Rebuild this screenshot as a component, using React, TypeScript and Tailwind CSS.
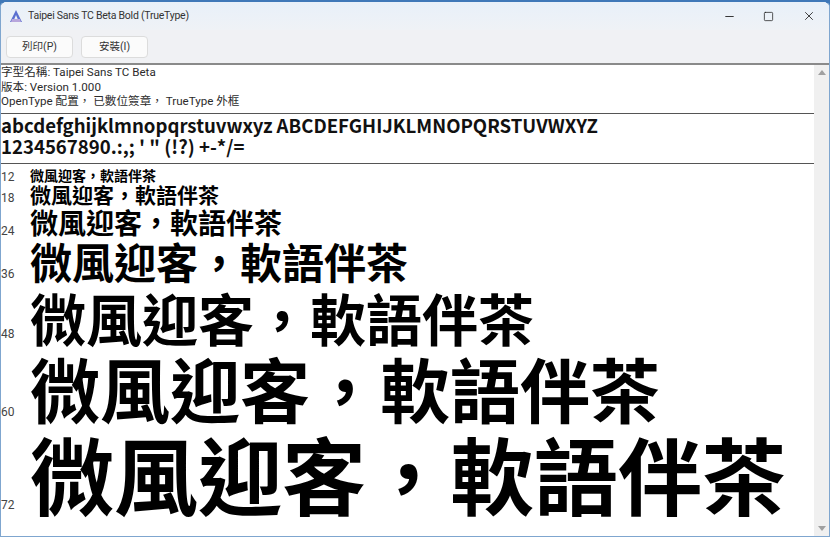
import React from 'react';
import { Minus, Square, X } from 'lucide-react';

const SAMPLE = '微風迎客\uFF0C軟語伴茶';

const ROWS = [
  { pt: 12, size: 'text-[14px]', height: 'h-[17px]', num: '-mb-[2px]' },
  { pt: 18, size: 'text-[21px]', height: 'h-[23px]', num: 'mb-0' },
  { pt: 24, size: 'text-[28px]', height: 'h-[31px]', num: '-mb-[2px]' },
  { pt: 36, size: 'text-[42px]', height: 'h-[46px]', num: 'mb-[1px]' },
  { pt: 48, size: 'text-[56px]', height: 'h-[63px]', num: 'mb-[4px]' },
  { pt: 60, size: 'text-[70px]', height: 'h-[78px]', num: 'mb-[4px]' },
  { pt: 72, size: 'text-[84px]', height: 'h-[92px]', num: 'mb-[3px]' },
];

export default function App() {
  return (
    <div className="w-[830px] h-[537px] bg-[#3f78b8]">
      <div className="w-full h-full overflow-hidden flex flex-col rounded-t-[7px] bg-white border-t-2 border-t-[#3f78b8] border-x border-x-[#7fa6cf] border-b border-b-[#7fa6cf] font-['Roboto','Noto_Sans_CJK_TC',sans-serif] text-[#1a1a1a]">
        <div className="h-[28px] shrink-0 flex items-center bg-gradient-to-b from-[#e8f0f9] to-[#eff2f6]">
          <svg className="ml-[8px] w-[14px] h-[14px]" viewBox="0 0 14 14">
            <path d="M7 1 L13 13 L10 13 L7 6 L4 13 L1 13 Z" fill="#5b6fd0" />
            <path d="M3 10 L11 10 L12 13 L2 13 Z" fill="#b7a6dc" />
          </svg>
          <span className="ml-[5px] text-[10.5px] tracking-[-0.25px] text-[#333]">Taipei Sans TC Beta Bold (TrueType)</span>
          <div className="ml-auto flex items-center">
            <div className="w-[39px] flex justify-center"><Minus size={13} strokeWidth={1.6} /></div>
            <div className="w-[39px] flex justify-center"><Square size={11} strokeWidth={1.6} /></div>
            <div className="w-[41px] flex justify-center"><X size={14} strokeWidth={1.4} /></div>
          </div>
        </div>
        <div className="h-[33px] shrink-0 flex items-center gap-[8px] pl-[5px] bg-[#f0f1f4]">
          <button className="w-[67px] h-[22px] rounded-[4px] border border-[#dcdcdc] bg-[#fbfbfb] text-[10.5px] text-[#333]">列印(P)</button>
          <button className="w-[67px] h-[22px] rounded-[4px] border border-[#dcdcdc] bg-[#fbfbfb] text-[10.5px] text-[#333]">安裝(I)</button>
        </div>
        <div className="h-[2px] shrink-0 bg-[#8a8a8a]" />
        <div className="flex-1 min-h-0 flex">
          <div className="flex-1 min-w-0 flex flex-col overflow-hidden">
            <div className="h-[48px] shrink-0 text-[11.6px] leading-[14.5px] text-[#2b2b2b] whitespace-nowrap">
              <div>字型名稱: Taipei Sans TC Beta</div>
              <div>版本: Version 1.000</div>
              <div>OpenType 配置{'\uFF0C'} 已數位簽章{'\uFF0C'} TrueType 外框</div>
            </div>
            <div className="h-[51px] shrink-0 border-y border-[#555] font-['Noto_Sans_CJK_TC',sans-serif] font-bold text-[18.6px] leading-[21px] text-[#111] whitespace-nowrap">
              <div>abcdefghijklmnopqrstuvwxyz ABCDEFGHIJKLMNOPQRSTUVWXYZ</div>
              <div>1234567890.:,; ' " (!?) +-*/=</div>
            </div>
            <div className="flex-1 min-h-0 pt-[1px] font-['Noto_Sans_CJK_TC',sans-serif]">
              {ROWS.map((row) => (
                <div key={row.pt} className={`flex items-end ${row.height}`}>
                  <span className={`w-[29px] shrink-0 text-[12px] leading-[14px] text-[#444] font-['Roboto',sans-serif] ${row.num}`}>{row.pt}</span>
                  <span className={`${row.size} font-bold leading-none text-black whitespace-nowrap`}>{SAMPLE}</span>
                </div>
              ))}
            </div>
          </div>
          <div className="w-[15px] shrink-0 flex flex-col items-center justify-between py-[5px] bg-[#f0f0f0]">
            <div className="w-0 h-0 border-x-[4px] border-x-transparent border-b-[5px] border-b-[#a0a0a0]" />
            <div className="w-0 h-0 border-x-[4px] border-x-transparent border-t-[5px] border-t-[#a0a0a0]" />
          </div>
        </div>
      </div>
    </div>
  );
}
